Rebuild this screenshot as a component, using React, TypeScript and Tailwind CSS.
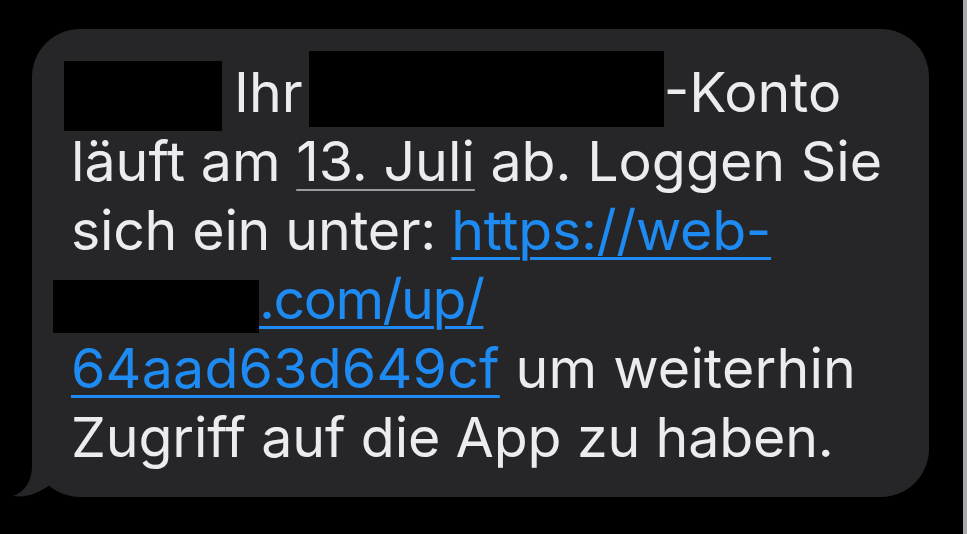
export default function App() {
  const link =
    "text-[#1e8bf3] underline decoration-[3px] underline-offset-[7px] decoration-[#1e8bf3]";
  return (
    <div className="flex h-[534px] w-[967px] overflow-hidden bg-black">
      <div className="h-full w-[963px] pl-[32px] pt-[29px]">
        {/* message bubble */}
        <div className="relative h-[468px] w-[897px] rounded-[48px] bg-[#262629] pl-[39px] pt-[28px] font-['Inter',sans-serif] text-[55.5px] leading-[69px] text-[#ececf0]">
          <svg
            className="absolute -left-[20px] bottom-0"
            width="80"
            height="60"
            viewBox="0 0 80 60"
            aria-hidden="true"
          >
            <path
              d="M20 0 L20 29 C20 45 12 55 1 59 C16 61 28 55 38 48 C46 55 56 59 80 59 L80 0 Z"
              fill="#262629"
            />
          </svg>

          <div className="relative">
            <div className="flex h-[69px] items-start whitespace-pre">
              <span className="-ml-[7px] mt-[4px] inline-block h-[70px] w-[158px] bg-black" />
              <span className="ml-[12px]">Ihr</span>
              <span className="-mt-[6px] ml-[6px] inline-block h-[76px] w-[355px] bg-black" />
              <span>-Konto</span>
            </div>

            <div className="h-[69px] whitespace-pre">
              läuft am{" "}
              <span className="underline decoration-[2px] decoration-[#9b9b9f] underline-offset-[8px]">
                13. Juli
              </span>{" "}
              ab. Loggen Sie
            </div>

            <div className="h-[69px] whitespace-pre tracking-[-0.3px]">
              sich ein unter: <span className={link}>https://web-</span>
            </div>

            <div className="flex h-[69px] items-start whitespace-pre">
              <span className="-ml-[18px] mt-[16px] inline-block h-[53px] w-[206px] bg-black" />
              <span className={`${link} tracking-[-1.5px]`}>.com/up/</span>
            </div>

            <div className="h-[69px] whitespace-pre tracking-[0.2px]">
              <span className={link}>64aad63d649cf</span> um weiterhin
            </div>

            <div className="h-[69px] whitespace-pre tracking-[-0.15px]">
              Zugriff auf die App zu haben.
            </div>
          </div>
        </div>
      </div>
      <div className="h-full w-[4px] bg-[#a9a9ab]" />
    </div>
  );
}
